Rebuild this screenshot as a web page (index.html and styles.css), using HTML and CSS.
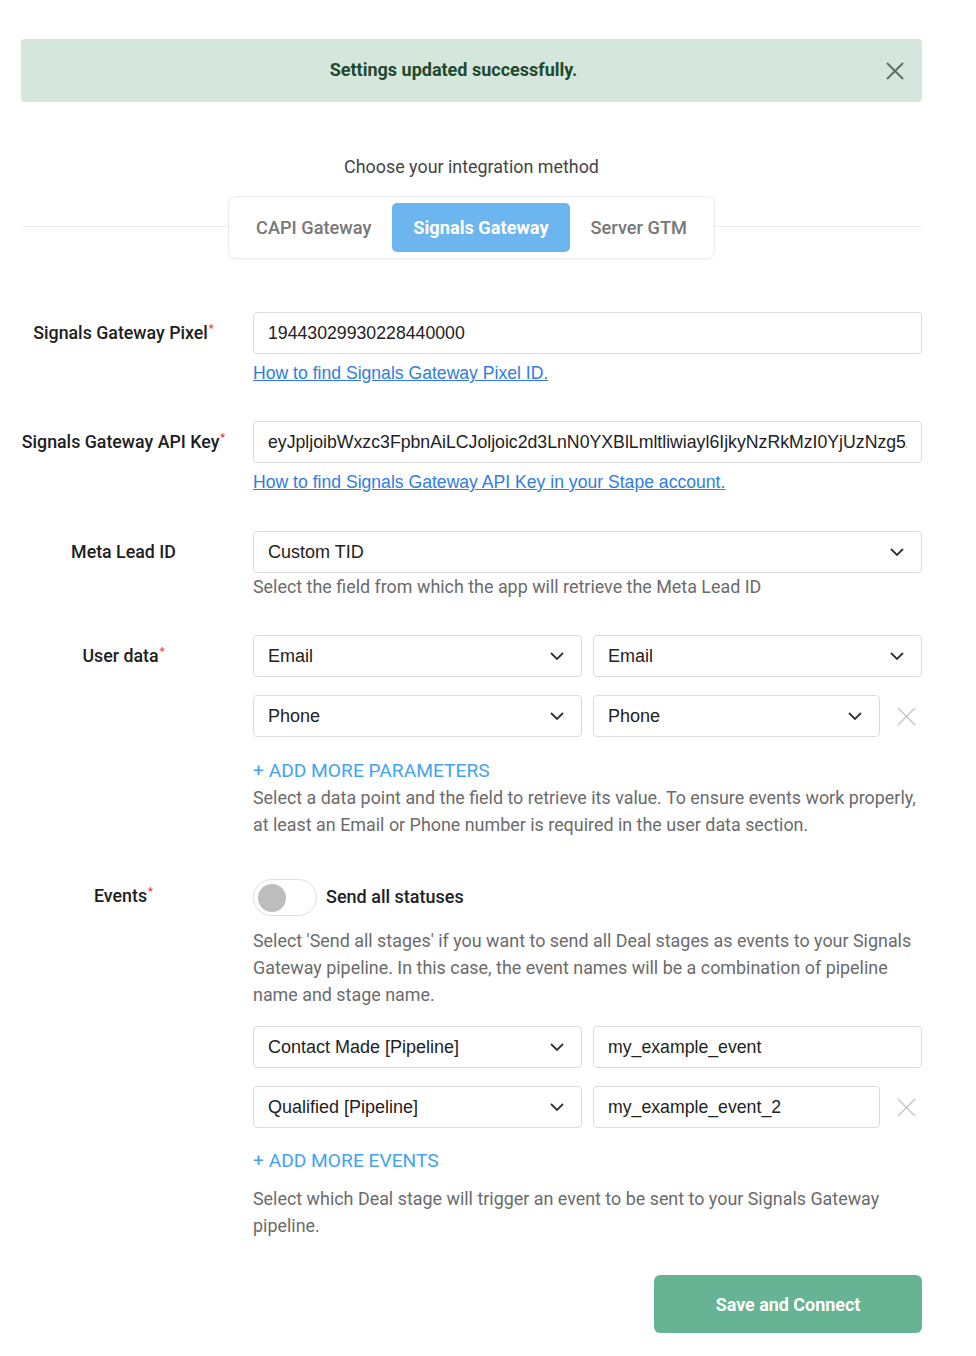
FILE: index.html
```html
<!DOCTYPE html>
<html lang="en">
<head>
    <meta charset="UTF-8">
    <meta name="viewport" content="width=device-width, initial-scale=1.0">
    <title>Signals Gateway Settings</title>
    <link rel="stylesheet" href="styles.css">
</head>
<body>
<div class="page">
    <div class="alert">
        <span class="alert-text">Settings updated successfully.</span>
        <button class="alert-close" type="button" aria-label="Close">
            <svg width="18" height="18" viewBox="0 0 18 18"><path d="M1 1L17 17M17 1L1 17"/></svg>
        </button>
    </div>

    <p class="method-title">Choose your integration method</p>
    <div class="method">
        <div class="tabs">
            <button class="tab" type="button">CAPI Gateway</button>
            <button class="tab active" type="button">Signals Gateway</button>
            <button class="tab" type="button">Server GTM</button>
        </div>
    </div>

    <form class="settings">
        <div class="field">
            <label class="field-label">Signals Gateway Pixel<sup>*</sup></label>
            <div class="field-body">
                <input class="text-input" type="text" value="19443029930228440000">
                <a class="help-link" href="#">How to find Signals Gateway Pixel ID.</a>
            </div>
        </div>

        <div class="field field-api">
            <label class="field-label">Signals Gateway API Key<sup>*</sup></label>
            <div class="field-body">
                <input class="text-input" type="text" value="eyJpljoibWxzc3FpbnAiLCJoljoic2d3LnN0YXBlLmltliwiayl6IjkyNzRkMzI0YjUzNzg5ZTA4NmQ3YTQ1">
                <a class="help-link" href="#">How to find Signals Gateway API Key in your Stape account.</a>
            </div>
        </div>

        <div class="field field-lead">
            <label class="field-label">Meta Lead ID</label>
            <div class="field-body">
                <div class="select">
                    <span>Custom TID</span>
                    <svg class="chevron" width="14" height="8" viewBox="0 0 14 8"><path d="M1 1l6 6 6-6"/></svg>
                </div>
                <p class="hint hint-near">Select the field from which the app will retrieve the Meta Lead ID</p>
            </div>
        </div>

        <div class="field field-wide">
            <label class="field-label">User data<sup>*</sup></label>
            <div class="field-body">
                <div class="pair">
                    <div class="select">
                        <span>Email</span>
                        <svg class="chevron" width="14" height="8" viewBox="0 0 14 8"><path d="M1 1l6 6 6-6"/></svg>
                    </div>
                    <div class="pair-end">
                        <div class="select">
                            <span>Email</span>
                            <svg class="chevron" width="14" height="8" viewBox="0 0 14 8"><path d="M1 1l6 6 6-6"/></svg>
                        </div>
                    </div>
                </div>
                <div class="pair">
                    <div class="select">
                        <span>Phone</span>
                        <svg class="chevron" width="14" height="8" viewBox="0 0 14 8"><path d="M1 1l6 6 6-6"/></svg>
                    </div>
                    <div class="pair-end">
                        <div class="select">
                            <span>Phone</span>
                            <svg class="chevron" width="14" height="8" viewBox="0 0 14 8"><path d="M1 1l6 6 6-6"/></svg>
                        </div>
                        <button class="remove" type="button" aria-label="Remove">
                            <svg width="19" height="19" viewBox="0 0 19 19"><path d="M1 1L18 18M18 1L1 18"/></svg>
                        </button>
                    </div>
                </div>
                <a class="add-more" href="#">+ Add more parameters</a>
                <p class="hint hint-tall">Select a data point and the field to retrieve its value. To ensure events work properly, at least an Email or Phone number is required in the user data section.</p>
            </div>
        </div>

        <div class="field">
            <label class="field-label field-label-short">Events<sup>*</sup></label>
            <div class="field-body">
                <div class="switch-row">
                    <span class="switch"><span class="switch-knob"></span></span>
                    <span class="switch-text">Send all statuses</span>
                </div>
                <p class="hint hint-tall hint-gap">Select 'Send all stages' if you want to send all Deal stages as events to your Signals Gateway pipeline. In this case, the event names will be a combination of pipeline name and stage name.</p>
                <div class="pairs-events">
                    <div class="pair">
                        <div class="select">
                            <span>Contact Made [Pipeline]</span>
                            <svg class="chevron" width="14" height="8" viewBox="0 0 14 8"><path d="M1 1l6 6 6-6"/></svg>
                        </div>
                        <div class="pair-end">
                            <input class="text-input" type="text" value="my_example_event">
                        </div>
                    </div>
                    <div class="pair">
                        <div class="select">
                            <span>Qualified [Pipeline]</span>
                            <svg class="chevron" width="14" height="8" viewBox="0 0 14 8"><path d="M1 1l6 6 6-6"/></svg>
                        </div>
                        <div class="pair-end">
                            <input class="text-input" type="text" value="my_example_event_2">
                            <button class="remove" type="button" aria-label="Remove">
                                <svg width="19" height="19" viewBox="0 0 19 19"><path d="M1 1L18 18M18 1L1 18"/></svg>
                            </button>
                        </div>
                    </div>
                </div>
                <a class="add-more add-events" href="#">+ Add more events</a>
                <p class="hint hint-tall hint-last">Select which Deal stage will trigger an event to be sent to your Signals Gateway pipeline.</p>
            </div>
        </div>

        <div class="actions">
            <button class="btn-save" type="button">Save and Connect</button>
        </div>
    </form>
</div>
</body>
</html>
```

FILE: styles.css
```css
body {
    margin: 0;
    font-family: Roboto, "Liberation Sans", Arial, sans-serif;
    color: #222;
    background: #fff;
}
.page {
    width: 901px;
    margin-left: 21px;
    padding-top: 39px;
}
button {
    font-family: inherit;
    border: none;
    background: none;
    padding: 0;
    cursor: pointer;
}

/* success banner */
.alert {
    display: flex;
    align-items: center;
    height: 63px;
    padding-right: 18px;
    background: #d5e7dd;
    border-radius: 4px;
}
.alert-text {
    flex: 1;
    text-align: center;
    font-size: 18px;
    font-weight: 700;
    color: #1f4a2b;
    margin-top: -2px;
}
.alert-close {
    width: 18px;
    height: 18px;
    display: flex;
}
.alert-close path {
    stroke: #6a6a6a;
    stroke-width: 2;
}

/* integration method switcher */
.method-title {
    margin: 53px 0 0;
    line-height: 24px;
    text-align: center;
    font-size: 17.9px;
    color: #444;
}
.method {
    display: flex;
    align-items: center;
    margin-top: 17px;
}
.method::before,
.method::after {
    content: "";
    flex: 1;
    height: 1px;
    margin-top: -3px;
    background: #efefef;
}
.tabs {
    display: flex;
    padding: 6px;
    border: 1px solid #ececec;
    border-radius: 8px;
    box-shadow: 0 1px 2px rgba(0, 0, 0, 0.04);
}
.tab {
    height: 49px;
    padding: 0 21px;
    font-size: 18.2px;
    font-weight: 500;
    color: #777;
    border-radius: 5px;
}
.tab.active {
    background: #6db5ef;
    color: #fff;
    font-weight: 700;
}

/* form rows */
.settings {
    margin-top: 53px;
}
.field {
    display: flex;
    gap: 27px;
    margin-bottom: 37px;
}
.field-api {
    margin-bottom: 38px;
}
.field-lead {
    margin-bottom: 35px;
}
.field-wide {
    margin-bottom: 41px;
}
.field-label {
    width: 205px;
    flex: none;
    text-align: center;
    line-height: 42px;
    font-size: 17.8px;
    font-weight: 500;
    color: #1e1e1e;
}
.field-label-short {
    line-height: 34px;
}
.field-label sup {
    color: #e53935;
    font-size: 11px;
    line-height: 0;
    vertical-align: 7px;
    margin-left: 1px;
}
.field-body {
    flex: 1;
    min-width: 0;
}
.text-input {
    display: block;
    width: 100%;
    height: 42px;
    box-sizing: border-box;
    padding: 0 14px;
    border: 1px solid #dcdcdc;
    border-radius: 4px;
    font-family: "Liberation Sans", Arial, sans-serif;
    font-size: 17.7px;
    color: #222;
    outline: none;
}
.help-link {
    display: block;
    margin-top: 8px;
    line-height: 22px;
    font-family: "Liberation Sans", Arial, sans-serif;
    font-size: 17.6px;
    color: #2f7de1;
    text-decoration: underline;
}
.select {
    display: flex;
    align-items: center;
    justify-content: space-between;
    height: 42px;
    box-sizing: border-box;
    padding: 0 17px 0 14px;
    border: 1px solid #dcdcdc;
    border-radius: 4px;
    font-family: "Liberation Sans", Arial, sans-serif;
    font-size: 18px;
    color: #222;
}
.chevron path {
    fill: none;
    stroke: #333;
    stroke-width: 1.8;
}
.hint {
    margin: 0;
    line-height: 26px;
    font-size: 17.9px;
    color: #6b6b6b;
}
.hint-near {
    margin-top: 1px;
}
.hint-tall {
    line-height: 27px;
}
.hint-gap {
    margin-top: 11px;
}
.hint-last {
    margin-top: 11px;
}

/* paired selects */
.pair {
    display: grid;
    grid-template-columns: 1fr 1fr;
    column-gap: 11px;
}
.pair + .pair {
    margin-top: 18px;
}
.pair-end {
    display: flex;
    gap: 11px;
    min-width: 0;
}
.pair-end > .select,
.pair-end > .text-input {
    flex: 1;
    min-width: 0;
}
.remove {
    width: 31px;
    flex: none;
    display: flex;
    align-items: center;
    justify-content: center;
}
.remove path {
    stroke: #c9c9c9;
    stroke-width: 1.6;
}
.add-more {
    display: block;
    margin-top: 21px;
    line-height: 26px;
    font-size: 19.2px;
    color: #43a3f0;
    text-decoration: none;
    text-transform: uppercase;
}
.add-events {
    margin-top: 20px;
}
.pairs-events {
    margin-top: 18px;
}

/* toggle */
.switch-row {
    display: flex;
    align-items: center;
    gap: 9px;
    height: 37px;
}
.switch {
    width: 64px;
    height: 37px;
    box-sizing: border-box;
    padding: 0 4px;
    display: flex;
    align-items: center;
    border: 1px solid #dedede;
    border-radius: 19px;
}
.switch-knob {
    width: 28px;
    height: 28px;
    border-radius: 50%;
    background: #bdbdbd;
}
.switch-text {
    font-size: 18px;
    font-weight: 500;
    color: #1e1e1e;
    margin-top: -3px;
}

.actions {
    display: flex;
    justify-content: flex-end;
    margin-top: -1px;
}
.btn-save {
    width: 268px;
    height: 58px;
    background: #66b493;
    border-radius: 6px;
    color: #fff;
    font-size: 17.9px;
    font-weight: 700;
}
```
